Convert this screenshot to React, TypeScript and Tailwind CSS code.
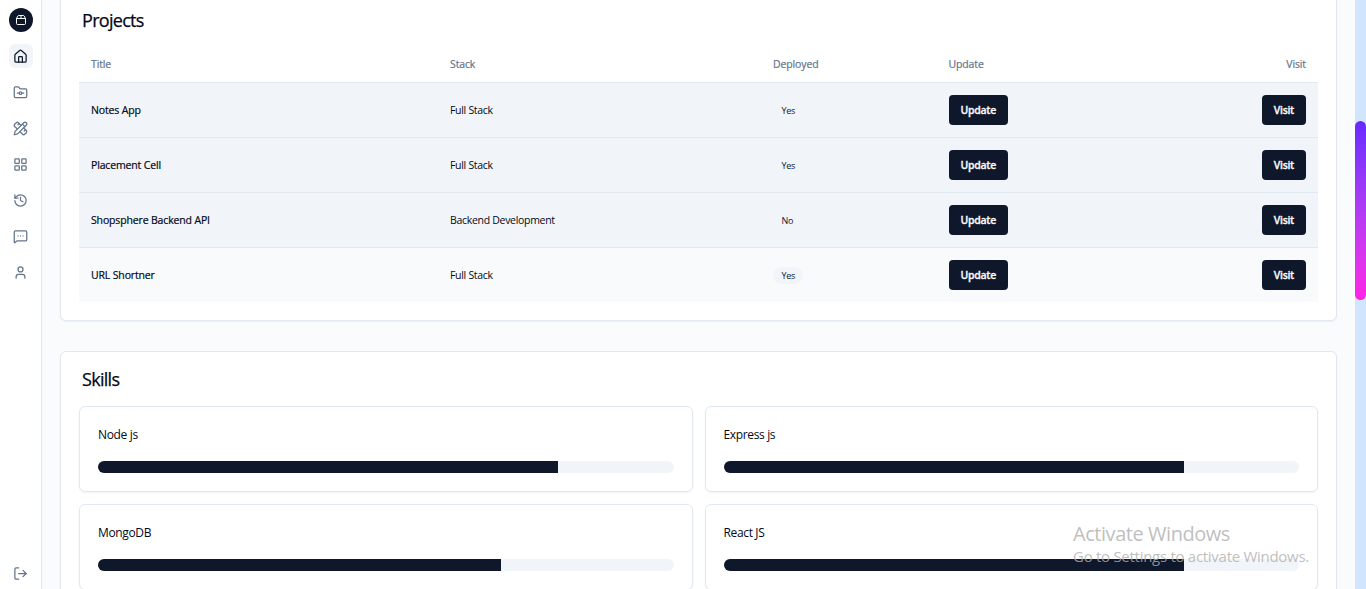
import type { ReactNode } from "react";
import {
  FolderGit,
  History,
  House,
  LayoutGrid,
  LogOut,
  MessageSquareMore,
  Package2,
  PencilRuler,
  User,
} from "lucide-react";

const navItems = [FolderGit, PencilRuler, LayoutGrid, History, MessageSquareMore, User];

const projects = [
  { title: "Notes App", stack: "Full Stack", deployed: "Yes", highlighted: true },
  { title: "Placement Cell", stack: "Full Stack", deployed: "Yes", highlighted: true },
  { title: "Shopsphere Backend API", stack: "Backend Development", deployed: "No", highlighted: true },
  { title: "URL Shortner", stack: "Full Stack", deployed: "Yes", highlighted: false },
];

const skills = [
  { name: "Node js", level: 80 },
  { name: "Express js", level: 80 },
  { name: "MongoDB", level: 70 },
  { name: "React JS", level: 80 },
];

const columns = "grid grid-cols-[359px_323px_175.5px_1fr_auto] items-center";

function Sidebar() {
  return (
    <aside className="flex w-[42px] shrink-0 flex-col items-center border-r border-[#e2e8f0] bg-white pt-2 pb-1">
      <div className="flex size-6 items-center justify-center rounded-full bg-[#0f172a] text-[#f8fafc]">
        <Package2 size={12} />
      </div>
      <nav className="mt-3 flex flex-col items-center gap-3 text-[#64748b]">
        <a className="flex size-6 items-center justify-center rounded-md bg-[#f1f5f9] text-[#0f172a]">
          <House size={15} />
        </a>
        {navItems.map((Icon, i) => (
          <a key={i} className="flex size-6 items-center justify-center">
            <Icon size={15} />
          </a>
        ))}
      </nav>
      <a className="mt-auto flex size-6 items-center justify-center text-[#64748b]">
        <LogOut size={15} />
      </a>
    </aside>
  );
}

function Button({ children }: { children: ReactNode }) {
  return (
    <button className="flex h-[30px] items-center rounded-[4px] bg-[#0f172a] px-3 pt-px text-[10.5px] font-semibold tracking-[-0.28px] text-[#f8fafc] [-webkit-text-stroke:0.3px]">
      {children}
    </button>
  );
}

function Heading({ children }: { children: ReactNode }) {
  return (
    <h2 className="pl-[3px] text-[18px] leading-[24px] font-medium tracking-[-0.7px] [-webkit-text-stroke:0.25px]">
      {children}
    </h2>
  );
}

function Projects() {
  return (
    <section className="h-[331px] shrink-0 rounded-[6px] border border-[#e2e8f0] bg-white px-[18px] pt-[17px] shadow-xs">
      <Heading>Projects</Heading>
      <div className="mt-[14px]">
        <div className={`${columns} h-[37px] border-b border-[#e2e8f0] px-3 pt-px text-[10.5px] font-medium tracking-[-0.13px] text-[#64748b] [-webkit-text-stroke:0.2px]`}>
          <span>Title</span>
          <span>Stack</span>
          <span>Deployed</span>
          <span>Update</span>
          <span>Visit</span>
        </div>
        {projects.map((p, i) => (
          <div
            key={p.title}
            className={`${columns} px-3 text-[10.5px] ${i < projects.length - 1 ? "h-[55px] border-b" : "h-[54px]"} ${
              p.highlighted ? "border-[#e2e8f0] bg-[#f1f5f9]" : "bg-[#f9fafc]"
            }`}
          >
            <span className="pt-px font-medium tracking-[-0.15px] [-webkit-text-stroke:0.2px]">{p.title}</span>
            <span className="pt-px tracking-[-0.3px]">{p.stack}</span>
            <span className="flex pt-px">
              <span className="flex h-[17px] items-center rounded-full bg-[#f1f5f9] pr-[7.5px] pl-[8.5px] text-[9px] tracking-[-0.25px] text-[#0f172a]">
                {p.deployed}
              </span>
            </span>
            <span className="flex">
              <Button>Update</Button>
            </span>
            <Button>Visit</Button>
          </div>
        ))}
      </div>
    </section>
  );
}

function Skills() {
  return (
    <section className="h-[400px] shrink-0 rounded-[6px] border border-[#e2e8f0] bg-white px-[18px] pt-[15px] shadow-xs">
      <Heading>Skills</Heading>
      <div className="mt-[15px] grid grid-cols-2 gap-3">
        {skills.map((s) => (
          <div key={s.name} className="h-[86px] rounded-[6px] border border-[#e2e8f0] px-[18px] pt-[19px] shadow-xs">
            <h3 className="text-[12px] leading-[18px] tracking-[-0.35px]">{s.name}</h3>
            <div className="mt-[17px] h-3 overflow-hidden rounded-full bg-[#f1f5f9]">
              <div className="h-full bg-[#0f172a]" style={{ width: `${s.level}%` }} />
            </div>
          </div>
        ))}
      </div>
    </section>
  );
}

export default function App() {
  return (
    <div className="relative flex h-[589px] w-full overflow-hidden bg-[#fafbfd] font-['Open_Sans','Noto_Sans',sans-serif] text-[#020817]">
      <Sidebar />
      <main className="-mt-[10px] flex min-w-0 flex-1 flex-col gap-[30px] px-[18px]">
        <Projects />
        <Skills />
      </main>
      <div className="w-[11px] shrink-0 bg-[#d1e5ff] pt-[121px]">
        <div className="h-[179px] rounded-full bg-linear-to-b from-[#6629ff] to-[#ff22e6]" />
      </div>
      <div className="pointer-events-none absolute top-[521px] left-[1073px] whitespace-nowrap text-[#aeaeae]/80">
        <p className="text-[20px] leading-[26px] tracking-[-0.45px]">Activate Windows</p>
        <p className="-mt-px text-[15px] leading-[20px] tracking-[-0.28px]">Go to Settings to activate Windows.</p>
      </div>
    </div>
  );
}
